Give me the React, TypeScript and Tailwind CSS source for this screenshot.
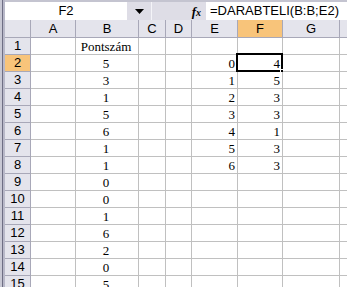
import React from "react";

const COLS = ["A", "B", "C", "D", "E", "F", "G", "H"];
const WIDTHS = [45, 63, 27, 26, 46, 45, 57, 40];

const colB = ["Pontszám", "5", "3", "1", "5", "6", "1", "1", "0", "0", "1", "6", "2", "0", "5"];
const colE: Record<number, string> = { 2: "0", 3: "1", 4: "2", 5: "3", 6: "4", 7: "5", 8: "6" };
const colF: Record<number, string> = { 2: "4", 3: "5", 4: "3", 5: "3", 6: "1", 7: "3", 8: "3" };

const sans = { fontFamily: '"Liberation Sans", Arial, sans-serif' };
const serif = { fontFamily: '"Liberation Serif", "Times New Roman", serif' };

function Cell({ row, col }: { row: number; col: number }) {
  let text = "";
  let align = "justify-center";
  if (col === 1) text = colB[row - 1] ?? "";
  if (col === 4) {
    text = colE[row] ?? "";
    align = "justify-end";
  }
  if (col === 5) {
    text = colF[row] ?? "";
    align = "justify-end";
  }
  const selected = row === 2 && col === 5;
  return (
    <div
      className={`relative flex h-[17px] shrink-0 items-end border-b border-r border-[#c0c0c0] bg-white pb-[0px] pr-[2px] text-[13px] leading-[15px] text-black ${align}`}
      style={{ width: WIDTHS[col], ...serif }}
    >
      {text}
      {selected && (
        <>
          <div className="pointer-events-none absolute -left-[2px] -top-[2px] h-[19px] w-[47px] border-2 border-black" />
          <div className="absolute -bottom-[4px] -right-[4px] h-[6px] w-[6px] border border-white bg-black" />
        </>
      )}
    </div>
  );
}

export default function App() {
  const rows = Array.from({ length: 15 }, (_, i) => i + 1);
  return (
    <div className="flex h-[287px] w-[347px] overflow-hidden bg-[#dcdce6]">
      <div className="flex w-[5px] shrink-0">
        <div className="w-[2px] bg-[#c8c8d4]" />
        <div className="w-[1px] bg-[#6e6e84]" />
        <div className="w-[2px] bg-[#b8b8c8]" />
      </div>
      <div className="flex min-w-0 flex-1 flex-col">
        {/* formula bar */}
        <div className="flex h-[20px] shrink-0 flex-col">
          <div className="h-[2px] bg-[#c4c4d0]" />
          <div className="flex h-[18px] items-stretch bg-[#dedde6]">
            <div
              className="flex w-[122px] items-center justify-center bg-white text-[13px] text-black"
              style={sans}
            >
              F2
            </div>
            <div className="flex w-[24px] items-center justify-center">
              <svg width="9" height="5" viewBox="0 0 9 5">
                <path d="M0 0h9L4.5 5z" fill="#000" />
              </svg>
            </div>
            <div className="w-[1px] bg-[#f4f4f8]" />
            <div className="flex w-[54px] items-center justify-end pr-[5px]">
              <span
                className="text-[13px] font-bold italic leading-none text-black"
                style={serif}
              >
                f<span className="text-[10px]">x</span>
              </span>
            </div>
            <div
              className="flex flex-1 items-center bg-white pl-[4px] text-[13px] text-black"
              style={sans}
            >
              =DARABTELI(B:B;E2)
            </div>
          </div>
        </div>
        {/* column headers */}
        <div className="flex h-[18px] shrink-0">
          <div className="h-[18px] w-[26px] shrink-0 border-b border-r border-[#a8a8b8] bg-[#e4e4ec]" />
          {COLS.map((c, i) => (
            <div
              key={c}
              className={`flex h-[18px] shrink-0 items-center justify-center border-b border-r border-[#a8a8b8] text-[13px] text-black ${
                c === "F" ? "bg-[#f8c47a]" : "bg-[#e4e4ec]"
              }`}
              style={{ width: WIDTHS[i], ...sans }}
            >
              {c}
            </div>
          ))}
        </div>
        {rows.map((r) => (
          <div key={r} className="flex h-[17px] shrink-0">
            <div
              className={`flex h-[17px] w-[26px] shrink-0 items-center justify-center border-b border-r border-[#a8a8b8] text-[13px] text-black ${
                r === 2 ? "bg-[#f8c47a]" : "bg-[#e4e4ec]"
              }`}
              style={sans}
            >
              {r}
            </div>
            {COLS.map((c, i) => (
              <Cell key={c} row={r} col={i} />
            ))}
          </div>
        ))}
      </div>
    </div>
  );
}
